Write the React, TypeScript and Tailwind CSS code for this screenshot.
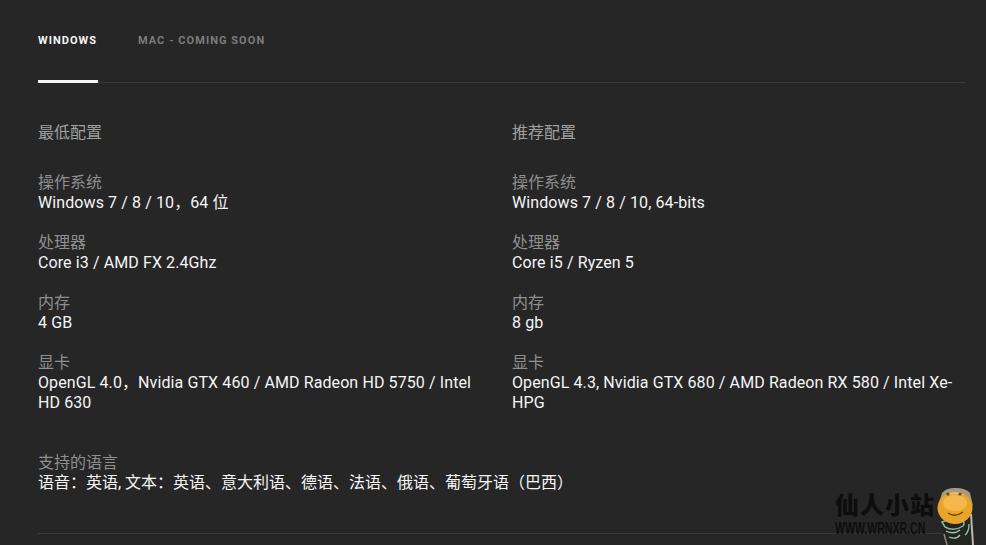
const cjk = "font-['Roboto','Noto_Sans_CJK_SC',sans-serif]";

interface Spec {
  label: string;
  value: string;
}

const minimum: Spec[] = [
  { label: "操作系统", value: "Windows 7 / 8 / 10，64 位" },
  { label: "处理器", value: "Core i3 / AMD FX 2.4Ghz" },
  { label: "内存", value: "4 GB" },
  { label: "显卡", value: "OpenGL 4.0，Nvidia GTX 460 / AMD Radeon HD 5750 / Intel HD 630" },
];

const recommended: Spec[] = [
  { label: "操作系统", value: "Windows 7 / 8 / 10, 64-bits" },
  { label: "处理器", value: "Core i5 / Ryzen 5" },
  { label: "内存", value: "8 gb" },
  { label: "显卡", value: "OpenGL 4.3, Nvidia GTX 680 / AMD Radeon RX 580 / Intel Xe-HPG" },
];

function SpecColumn({ title, specs }: { title: string; specs: Spec[] }) {
  return (
    <div className="w-[474px] shrink-0 pr-5">
      <h3 className="text-[16px] leading-5 font-normal text-[#a0a0a0] mb-[30px]">{title}</h3>
      <div className="flex flex-col gap-5">
        {specs.map((s) => (
          <div key={s.label}>
            <div className="text-[#8f8f8f] text-[16px] leading-5">{s.label}</div>
            <div className="text-[#f5f5f5] text-[16px] tracking-[0.1px] leading-5">{s.value}</div>
          </div>
        ))}
      </div>
    </div>
  );
}

function Face() {
  return (
    <svg width="40" height="57" viewBox="0 0 40 57">
      {/* torso */}
      <path d="M5 30 L36 28 L37 57 L9 57 Z" fill="#23261f" />
      <path d="M6 34 Q14 30 25 33 Q30 34 27 38 Q18 44 9 39 Z" fill="none" stroke="#8db5a2" strokeWidth="1.5" />
      <path d="M10 43 Q18 47 24 42 M13 49 Q20 52 24 47 M29 47 Q33 44 33 36" fill="none" stroke="#9fc4b2" strokeWidth="1.3" />
      <path d="M35 26 L37 57" stroke="#b9b9ae" strokeWidth="2" fill="none" />
      <path d="M8 46 L11 57" stroke="#8a8a80" strokeWidth="1.5" fill="none" />
      {/* head */}
      <path d="M6 5 Q10 0 19 0 Q30 0 34 5 L37 18 L30 12 L8 12 L2 18 Z" fill="#a89a80" />
      <ellipse cx="19" cy="20" rx="17.5" ry="16" fill="#e8a52a" />
      <ellipse cx="19" cy="15" rx="12" ry="8" fill="#f4b94a" />
      <path d="M10 7 Q19 1 29 7 Q20 5 10 7 Z" fill="#d9c08c" />
      <path d="M12 25 Q19 30 27 24" fill="none" stroke="#6f4610" strokeWidth="1.5" />
      <circle cx="12" cy="6" r="1.6" fill="#6d4a20" />
      <circle cx="24" cy="6" r="1.6" fill="#6d4a20" />
    </svg>
  );
}

export default function App() {
  return (
    <div className={`relative w-[986px] h-[545px] overflow-hidden bg-[#262626] pl-[38px] pr-5 ${cjk}`}>
      {/* Tabs */}
      <div className="flex h-[83px] border-b border-[#383838]">
        <div className="w-[60px] h-[83px] border-b-[3px] border-[#f5f5f5] pt-[34px] text-[11px] leading-[14px] font-bold tracking-[1.05px] text-[#f5f5f5] whitespace-nowrap">
          WINDOWS
        </div>
        <div className="ml-10 pt-[34px] text-[11px] leading-[14px] font-bold tracking-[1.05px] text-[#7c7c7c] whitespace-nowrap">
          MAC - COMING SOON
        </div>
      </div>

      <div className="flex mt-10">
        <SpecColumn title="最低配置" specs={minimum} />
        <SpecColumn title="推荐配置" specs={recommended} />
      </div>

      <div className="mt-10">
        <div className="text-[#8f8f8f] text-[16px] leading-5">支持的语言</div>
        <div className="text-[#f5f5f5] text-[16px] leading-5">语音：英语, 文本：英语、意大利语、德语、法语、俄语、葡萄牙语（巴西）</div>
      </div>

      <div className="mt-10 border-t border-[#383838]" />

      {/* Watermark */}
      <div className="absolute left-[835px] top-[494px] flex flex-col items-start">
        <span className="text-[24px] leading-[24px] font-black tracking-[1px] text-[#0d0d0d] whitespace-nowrap">仙人小站</span>
        <span className="mt-[2px] origin-left scale-x-[0.66] text-[16px] leading-[18px] font-bold text-[#0d0d0d] whitespace-nowrap font-['Liberation_Sans',sans-serif]">WWW.WRNXR.CN</span>
      </div>
      <div className="absolute left-[936px] top-[488px]">
        <Face />
      </div>
    </div>
  );
}
